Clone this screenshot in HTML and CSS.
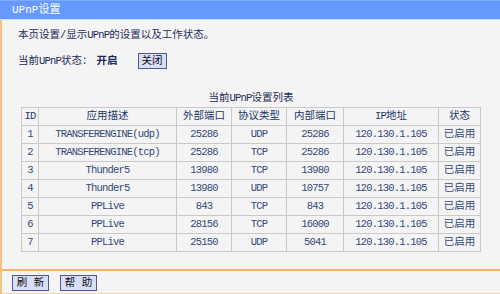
FILE: index.html
```html
<!DOCTYPE html>
<html>
<head>
<meta charset="utf-8">
<title>UPnP设置</title>
<link rel="stylesheet" href="styles.css">
</head>
<body>
<div class="page">
  <div class="titlebar">UPnP设置</div>
  <div class="content">
    <div class="main">
      <p class="intro">本页设置/显示<span class="lat">UPnP</span>的设置以及工作状态。</p>
      <div class="status">
        <span class="label">当前<span class="lat">UPnP</span>状态：</span><b class="on">开启</b><button class="btn btn-close">关闭</button>
      </div>
      <table class="list">
        <caption>当前<span class="lat">UPnP</span>设置列表</caption>
        <colgroup>
          <col class="c-id"><col class="c-desc"><col class="c-ext"><col class="c-proto"><col class="c-int"><col class="c-ip"><col class="c-state">
        </colgroup>
        <thead>
          <tr><th class="lat">ID</th><th>应用描述</th><th>外部端口</th><th>协议类型</th><th>内部端口</th><th><span class="lat">IP</span>地址</th><th>状态</th></tr>
        </thead>
        <tbody>
          <tr><td class="lat">1</td><td class="lat">TRANSFERENGINE(udp)</td><td class="lat">25286</td><td class="lat">UDP</td><td class="lat">25286</td><td class="lat">120.130.1.105</td><td>已启用</td></tr>
          <tr><td class="lat">2</td><td class="lat">TRANSFERENGINE(tcp)</td><td class="lat">25286</td><td class="lat">TCP</td><td class="lat">25286</td><td class="lat">120.130.1.105</td><td>已启用</td></tr>
          <tr><td class="lat">3</td><td class="lat">Thunder5</td><td class="lat">13980</td><td class="lat">TCP</td><td class="lat">13980</td><td class="lat">120.130.1.105</td><td>已启用</td></tr>
          <tr><td class="lat">4</td><td class="lat">Thunder5</td><td class="lat">13980</td><td class="lat">UDP</td><td class="lat">10757</td><td class="lat">120.130.1.105</td><td>已启用</td></tr>
          <tr><td class="lat">5</td><td class="lat">PPLive</td><td class="lat">843</td><td class="lat">TCP</td><td class="lat">843</td><td class="lat">120.130.1.105</td><td>已启用</td></tr>
          <tr><td class="lat">6</td><td class="lat">PPLive</td><td class="lat">28156</td><td class="lat">TCP</td><td class="lat">16000</td><td class="lat">120.130.1.105</td><td>已启用</td></tr>
          <tr><td class="lat">7</td><td class="lat">PPLive</td><td class="lat">25150</td><td class="lat">UDP</td><td class="lat">5041</td><td class="lat">120.130.1.105</td><td>已启用</td></tr>
        </tbody>
      </table>
    </div>
    <div class="footer">
      <button class="btn btn-wide">刷 新</button><button class="btn btn-wide">帮 助</button>
    </div>
  </div>
</div>
</body>
</html>
```

FILE: styles.css
```css
html, body {
  margin: 0;
  padding: 0;
  background: #f4f4f4;
}

body {
  width: 500px;
  height: 294px;
  overflow: hidden;
  font-family: "Liberation Mono", "Noto Sans CJK SC", monospace;
  font-size: 10.5px;
  color: #1e2b58;
}

.lat {
  letter-spacing: -0.8px;
}

.page {
  display: flex;
  flex-direction: column;
  height: 294px;
}

.titlebar {
  height: 18px;
  line-height: 18px;
  background: #6699ff;
  border-top: 1px solid #7eabff;
  border-bottom: 1px solid #cfdcff;
  color: #ffffff;
  padding-left: 12px;
  font-size: 11px;
}

.content {
  flex: 1;
  display: flex;
  flex-direction: column;
  border-left: 2px solid #f7c07a;
}

.main {
  flex: 1;
  padding: 8px 0 0 16px;
}

.intro {
  margin: 0;
  line-height: 14px;
}

.status {
  display: flex;
  align-items: center;
  margin-top: 11px;
  height: 16px;
  line-height: 14px;
}

.on {
  font-weight: bold;
  margin-left: 4px;
}

.btn {
  font-family: "Liberation Mono", "Noto Sans CJK SC", monospace;
  font-size: 10.5px;
  color: #111111;
  height: 16px;
  padding: 0;
  margin: 0;
  line-height: 14px;
  background: #d9ddf7;
  border: 1px solid #4d5a8e;
  border-radius: 0;
}

.btn-close {
  width: 29px;
  margin-left: 20px;
}

.btn-wide {
  width: 37px;
}

.list {
  margin: 22px 0 0 3px;
  border-collapse: collapse;
  table-layout: fixed;
  width: 459px;
  color: #34487a;
}

.list caption {
  line-height: 14px;
  padding-bottom: 2px;
  color: #1e2b58;
}

.c-id { width: 17px; }
.c-desc { width: 138px; }
.c-ext { width: 55px; }
.c-proto { width: 55px; }
.c-int { width: 57px; }
.c-ip { width: 95px; }
.c-state { width: 42px; }

.list th,
.list td {
  border: 1px solid #c9c9c9;
  height: 17px;
  line-height: 17px;
  padding: 0;
  text-align: center;
  font-weight: normal;
  white-space: nowrap;
  overflow: hidden;
}

.list th {
  color: #24366a;
}

.footer {
  display: flex;
  gap: 11px;
  padding: 4px 0 2px 10px;
  border-top: 2px solid #f5b466;
  border-bottom: 1px solid #f8d3a6;
}
```
